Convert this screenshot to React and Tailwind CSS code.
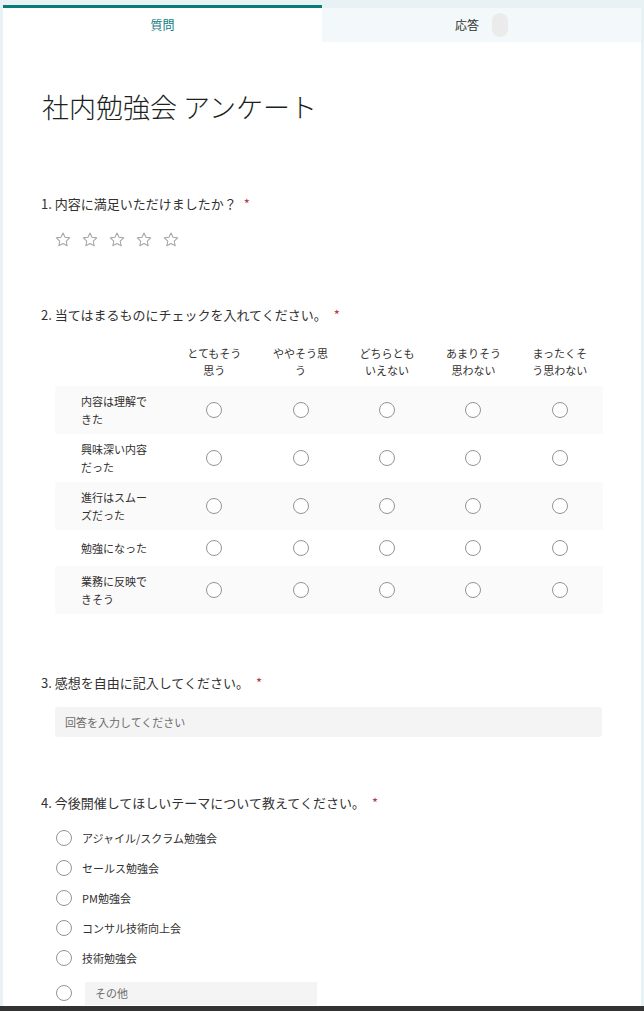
import React from "react";

const FONT = { fontFamily: '"Noto Sans CJK JP", "Noto Sans", sans-serif' };

function Star() {
  return (
    <svg width="16" height="15" viewBox="0 0 24 23" fill="none" stroke="#a6a6a6" strokeWidth="1.6" strokeLinejoin="round">
      <path d="M12 1.5l3.1 6.6 7.2.9-5.3 5 1.4 7.1L12 17.6l-6.4 3.5 1.4-7.1-5.3-5 7.2-.9z" />
    </svg>
  );
}

function Radio() {
  return <span className="block w-[16px] h-[16px] rounded-full border-[1.5px] border-[#949494] bg-white shrink-0" />;
}

function QLabel({ children }) {
  return (
    <div className="text-[13px] leading-[20px] text-[#323130]">
      {children}
      <span className="ml-[7px] text-[#b4374a]">*</span>
    </div>
  );
}

const cols = ["とてもそう思う", "ややそう思う", "どちらともいえない", "あまりそう思わない", "まったくそう思わない"];
const rows = ["内容は理解できた", "興味深い内容だった", "進行はスムーズだった", "勉強になった", "業務に反映できそう"];
const options = ["アジャイル/スクラム勉強会", "セールス勉強会", "PM勉強会", "コンサル技術向上会", "技術勉強会"];

export default function App() {
  return (
    <div style={FONT} className="w-[644px] h-[1011px] overflow-hidden flex flex-col bg-[#e8f1f4]">
      <div className="flex-1 flex flex-col px-[3px] pt-[5px] overflow-hidden">
        {/* Tabs */}
        <div className="flex h-[37px] shrink-0">
          <div className="w-[319px] bg-white border-t-[3px] border-[#077a7c] flex items-center justify-center text-[12px] text-[#0f7b83]">
            質問
          </div>
          <div className="flex-1 mt-[3px] bg-[#f3f9fa] flex items-center justify-center gap-[13px] text-[12px] text-[#323130]">
            <span>応答</span>
            <span className="block w-[16px] h-[24px] rounded-full bg-[#ebebeb]" />
          </div>
        </div>

        {/* Body */}
        <div className="flex-1 bg-white pl-[38px] pr-[39px] pt-[47px] overflow-hidden">
          <h1 className="text-[27px] leading-[36px] font-light text-[#201f1e] pl-[1px]">社内勉強会 アンケート</h1>

          {/* Q1 */}
          <div className="mt-[69px]">
            <QLabel>1. 内容に満足いただけましたか？</QLabel>
            <div className="flex gap-[11px] ml-[14px] mt-[18px]">
              {[0, 1, 2, 3, 4].map((i) => (
                <Star key={i} />
              ))}
            </div>
          </div>

          {/* Q2 */}
          <div className="mt-[58px]">
            <QLabel>2. 当てはまるものにチェックを入れてください。</QLabel>
            <div className="ml-[14px] mt-[20px] w-[548px]">
              <div className="grid grid-cols-[116px_repeat(5,1fr)]">
                <div />
                {cols.map((c) => (
                  <div key={c} className="flex justify-center">
                    <div className="w-[60px] text-center text-[11px] leading-[17px] text-[#323130]">{c}</div>
                  </div>
                ))}
              </div>
              <div className="mt-[7px]">
                {rows.map((r, i) => (
                  <div
                    key={r}
                    className={`grid grid-cols-[116px_repeat(5,1fr)] items-center py-[6px] ${i % 2 === 0 ? "bg-[#fafafa]" : "bg-white"}`}
                  >
                    <div className="pl-[26px] min-h-[24px] flex items-center">
                      <div className="w-[70px] text-[11px] leading-[18px] text-[#323130]">{r}</div>
                    </div>
                    {cols.map((c) => (
                      <div key={c} className="flex justify-center items-center h-[24px]">
                        <Radio />
                      </div>
                    ))}
                  </div>
                ))}
              </div>
            </div>
          </div>

          {/* Q3 */}
          <div className="mt-[59px]">
            <QLabel>3. 感想を自由に記入してください。</QLabel>
            <div className="ml-[14px] mt-[14px] h-[30px] rounded-[3px] bg-[#f4f4f4] flex items-center pl-[10px] text-[11px] text-[#6b6b6b]">
              回答を入力してください
            </div>
          </div>

          {/* Q4 */}
          <div className="mt-[56px]">
            <QLabel>4. 今後開催してほしいテーマについて教えてください。</QLabel>
            <div className="ml-[15px] mt-[10px] flex flex-col">
              {options.map((o) => (
                <div key={o} className="h-[30px] flex items-center gap-[10px]">
                  <Radio />
                  <span className="text-[11px] text-[#323130]">{o}</span>
                </div>
              ))}
              <div className="h-[30px] mt-[5px] flex items-center gap-[13px]">
                <Radio />
                <div className="w-[232px] h-[23px] bg-[#f4f4f4] flex items-center pl-[10px] text-[11px] text-[#6b6b6b]">
                  その他
                </div>
              </div>
            </div>
          </div>
        </div>
      </div>
      <div className="h-[5px] bg-[#333333] shrink-0" />
    </div>
  );
}
